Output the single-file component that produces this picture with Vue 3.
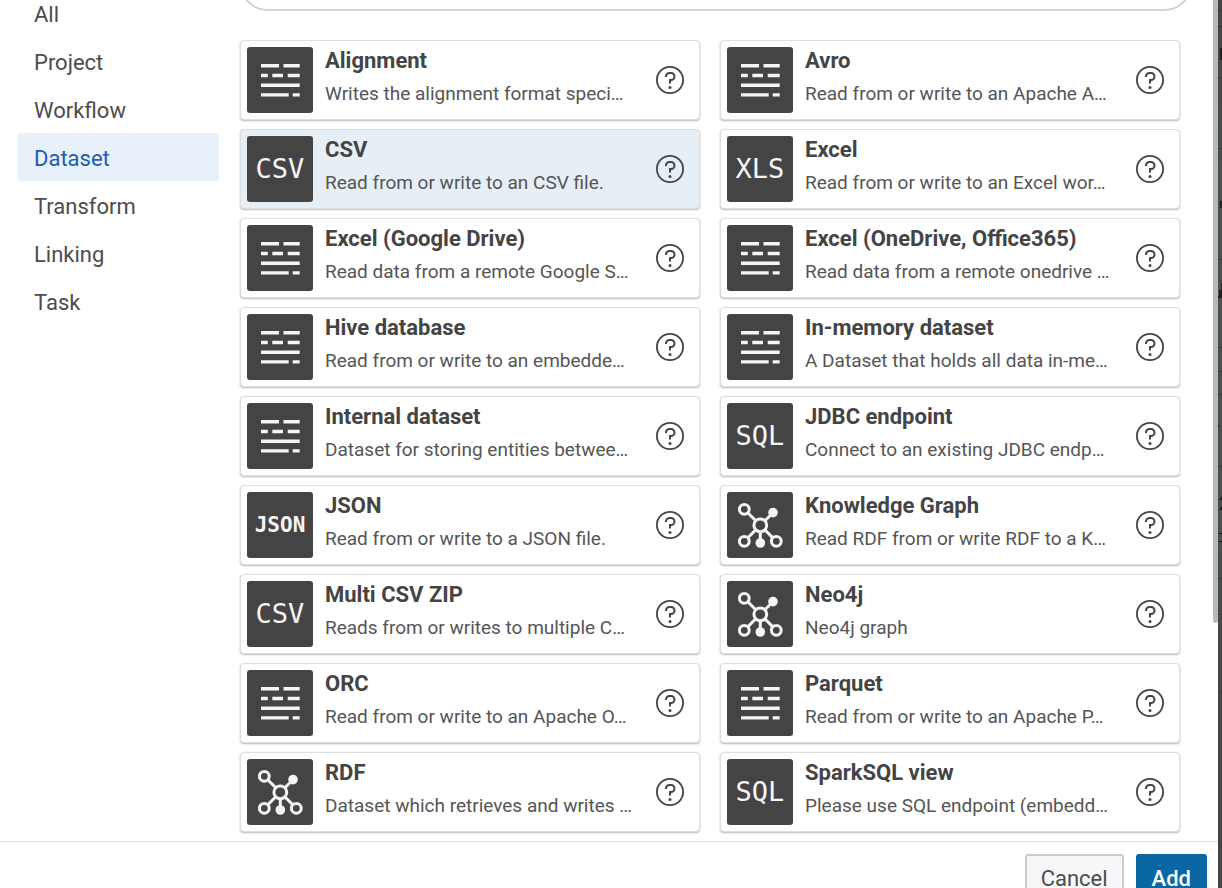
<script setup>
const categories = ['All', 'Project', 'Workflow', 'Dataset', 'Transform', 'Linking', 'Task']
const activeCategory = 'Dataset'

const plugins = [
  { title: 'Alignment', text: 'Writes the alignment format speci…', icon: 'lines' },
  { title: 'Avro', text: 'Read from or write to an Apache A…', icon: 'lines' },
  { title: 'CSV', text: 'Read from or write to an CSV file.', icon: 'CSV', selected: true },
  { title: 'Excel', text: 'Read from or write to an Excel wor…', icon: 'XLS' },
  { title: 'Excel (Google Drive)', text: 'Read data from a remote Google S…', icon: 'lines' },
  { title: 'Excel (OneDrive, Office365)', text: 'Read data from a remote onedrive …', icon: 'lines' },
  { title: 'Hive database', text: 'Read from or write to an embedde…', icon: 'lines' },
  { title: 'In-memory dataset', text: 'A Dataset that holds all data in-me…', icon: 'lines' },
  { title: 'Internal dataset', text: 'Dataset for storing entities betwee…', icon: 'lines' },
  { title: 'JDBC endpoint', text: 'Connect to an existing JDBC endp…', icon: 'SQL' },
  { title: 'JSON', text: 'Read from or write to a JSON file.', icon: 'JSON' },
  { title: 'Knowledge Graph', text: 'Read RDF from or write RDF to a K…', icon: 'graph' },
  { title: 'Multi CSV ZIP', text: 'Reads from or writes to multiple C…', icon: 'CSV' },
  { title: 'Neo4j', text: 'Neo4j graph', icon: 'graph' },
  { title: 'ORC', text: 'Read from or write to an Apache O…', icon: 'lines' },
  { title: 'Parquet', text: 'Read from or write to an Apache P…', icon: 'lines' },
  { title: 'RDF', text: 'Dataset which retrieves and writes …', icon: 'graph' },
  { title: 'SparkSQL view', text: 'Please use SQL endpoint (embedd…', icon: 'SQL' },
]
</script>

<template>
  <div class="screen">
    <div class="dialog">
      <div class="content">
        <nav class="sidebar" aria-label="Item type">
          <button
            v-for="name in categories"
            :key="name"
            type="button"
            class="category"
            :class="{ active: name === activeCategory }"
          >{{ name }}</button>
        </nav>
        <main class="main">
          <input class="search" type="search" aria-label="Search" />
          <ul class="grid">
            <li v-for="p in plugins" :key="p.title" class="card" :class="{ selected: p.selected }">
              <div class="tile">
                <svg v-if="p.icon === 'lines'" viewBox="0 0 66 66" aria-hidden="true">
                  <g fill="none" stroke="#f5f5f5" stroke-width="3.4">
                    <path d="M14 18.8h18M36.5 18.8h16.2" />
                    <path d="M14 28.5h6.8M25.3 28.5H36M40.7 28.5h12" />
                    <path d="M14 38.2h38.7" />
                    <path d="M14 47.9h27.7M45.7 47.9h7" />
                  </g>
                </svg>
                <svg v-else-if="p.icon === 'graph'" viewBox="0 0 66 66" aria-hidden="true">
                  <g fill="none" stroke="#f5f5f5" stroke-width="3">
                    <path d="M21 21l7.8 7.8M46 20.7l-8.1 8.1M28.8 37.8L21 45.6M37.8 37.8l7.8 7.8M33.3 40v11" />
                    <circle cx="17.3" cy="17.3" r="4.9" />
                    <circle cx="33.3" cy="33.3" r="6.4" />
                    <circle cx="17.3" cy="49.3" r="4.9" />
                    <circle cx="49.3" cy="49.3" r="4.9" />
                  </g>
                  <circle cx="46" cy="20.6" r="4.8" fill="#f5f5f5" />
                  <circle cx="33.3" cy="51" r="4.8" fill="#f5f5f5" />
                </svg>
                <span v-else class="letters" :class="{ small: p.icon.length > 3 }">{{ p.icon }}</span>
              </div>
              <div class="info">
                <h2>{{ p.title }}</h2>
                <p>{{ p.text }}</p>
              </div>
              <button type="button" class="help" :aria-label="'Help for ' + p.title">
                <svg viewBox="0 0 32 32" fill="#444" aria-hidden="true">
                  <circle cx="16" cy="16" r="13.1" fill="none" stroke="#444" stroke-width="1.8" />
                  <circle cx="16" cy="23.5" r="1.5" />
                  <path d="M17 8h-1.5A4.49 4.49 0 0 0 11 12.5V13h2v-.5A2.5 2.5 0 0 1 15.5 10H17a2.5 2.5 0 0 1 0 5h-2v4.5h2V17a4.5 4.5 0 0 0 0-9Z" />
                </svg>
              </button>
            </li>
          </ul>
        </main>
        <div class="scrollbar"></div>
      </div>
      <footer class="footer">
        <button type="button" class="btn">Cancel</button>
        <button type="button" class="btn primary">Add</button>
      </footer>
    </div>
    <div class="backdrop">
      <svg viewBox="0 0 4 888" aria-hidden="true">
        <path d="M0 10.5h4M0 77.5h4M0 148.5h4M0 259.5h4M0 347.5h4M0 371.5h4M0 394.5h4M0 466.5h4M0 578.5h4M0 614.5h4M0 692.5h4" stroke="#383b3b" />
        <path d="M0 26.5h4" stroke="#2a2c2c" />
        <path d="M2 48h2v12h-2zM2 201h2v7h-2zM3 283h1v15h-4v-2h1v-6h2zM0 425h1v2h-1zM1 500l3-4v4zM1 510l3-4v4zM0 533h4v1h-4zM0 541h4v1h-4z" fill="#20211f" />
      </svg>
    </div>
  </div>
</template>

<style>
body {
  margin: 0;
}
</style>

<style scoped>
* {
  box-sizing: border-box;
}
.screen {
  display: flex;
  height: 100vh;
  overflow: hidden;
  font-family: Roboto, sans-serif;
  color: #444;
  background: #fff;
}
.dialog {
  flex: 1;
  min-width: 0;
  display: flex;
  flex-direction: column;
}
.backdrop {
  flex: none;
  width: 4px;
  background: linear-gradient(#444, #4a4f4e 20%, #4a4f4e 60%, #444 80%);
}
.backdrop svg {
  display: block;
  width: 4px;
}
.content {
  flex: 1;
  min-height: 0;
  display: flex;
  overflow: hidden;
}
.sidebar {
  width: 222px;
  padding: 0 3px 0 18px;
  margin-top: -11px;
}
.category {
  display: block;
  width: 100%;
  height: 48px;
  padding: 3px 16px 0;
  border: 0;
  border-radius: 3px;
  background: none;
  font: 22px/30px Roboto, sans-serif;
  color: #4c4c4c;
  text-align: left;
}
.category.active {
  background: #e8f0fa;
  color: #215db0;
}
.main {
  flex: 1;
  min-width: 0;
  margin: -44px 21px 0 18px;
}
.search {
  display: block;
  width: 100%;
  height: 55px;
  border: 2px solid #d4d4d4;
  border-radius: 28px;
  background: #fff;
}
.grid {
  display: grid;
  grid-template-columns: 1fr 1fr;
  gap: 9px 20px;
  margin: 29px 12px 0 0;
  padding: 0;
  list-style: none;
}
.card {
  display: flex;
  align-items: center;
  height: 80px;
  padding: 0 13px 0 6px;
  border: 1px solid #dedede;
  border-radius: 4px;
  background: #fff;
  box-shadow: 0 1px 2px rgba(0, 0, 0, 0.28);
}
.card.selected {
  background: #e6eef6;
}
.tile {
  flex: none;
  display: flex;
  align-items: center;
  justify-content: center;
  width: 66px;
  height: 66px;
  border-radius: 3px;
  background: #444;
}
.tile svg {
  width: 66px;
  height: 66px;
}
.letters {
  font: 27px/32px "DejaVu Sans Mono", monospace;
  color: #f5f5f5;
}
.letters.small {
  font-size: 21px;
  font-weight: 700;
}
.info {
  flex: 1;
  min-width: 0;
  padding: 0 0 6px 12px;
  white-space: nowrap;
}
.info h2 {
  margin: 0;
  font-size: 22px;
  line-height: 34px;
  font-weight: 700;
}
.info p {
  margin: 0;
  font-size: 19px;
  line-height: 32px;
  color: #555;
}
.help {
  flex: none;
  width: 32px;
  height: 32px;
  padding: 0;
  border: 0;
  background: none;
}
.help svg {
  display: block;
  width: 32px;
  height: 32px;
}
.scrollbar {
  flex: none;
  width: 5px;
  height: 623px;
  border-radius: 0 0 3px 3px;
  background: #b9b9b9;
}
.footer {
  flex: none;
  display: flex;
  justify-content: flex-end;
  align-items: flex-start;
  gap: 12px;
  height: 47px;
  padding: 12px 11px 0 0;
  border-top: 1px solid #dcdcdc;
}
.btn {
  flex: none;
  height: 48px;
  padding: 1px 14px 0;
  border: 2px solid #c8cacc;
  border-radius: 3px;
  background: #f6f7f9;
  font: 22px/30px Roboto, sans-serif;
  color: #4c4c4c;
}
.btn.primary {
  border-color: #0a67a3;
  background: #0a67a3;
  color: #fff;
  font-weight: 500;
}
</style>
